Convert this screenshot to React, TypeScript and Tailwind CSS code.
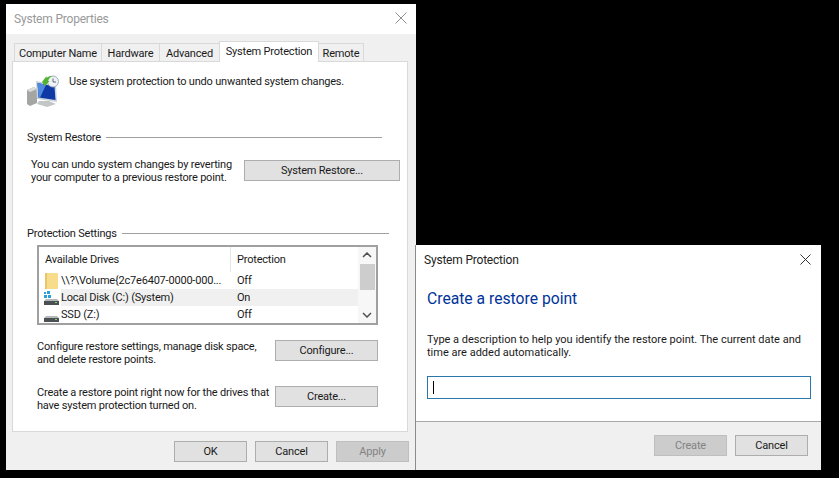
import React from "react";

const font = { sans: "font-['Roboto','Liberation_Sans',sans-serif]" };

const Btn = ({ label, className, disabled }: { label: string; className: string; disabled?: boolean }) => (
  <div
    className={`flex items-center justify-center h-[21px] border ${
      disabled ? "bg-[#cccccc] border-[#bfbfbf] text-[#838383]" : "bg-[#e1e1e1] border-[#adadad] text-[#1a1a1a]"
    } ${className}`}
  >
    {label}
  </div>
);

const CloseX = ({ color, size }: { color: string; size: number }) => (
  <svg width={size} height={size} viewBox="0 0 12 12" fill="none" stroke={color} strokeWidth="1">
    <path d="M0.5 0.5 L11.5 11.5 M11.5 0.5 L0.5 11.5" />
  </svg>
);

const RestoreIcon = () => (
  <svg width="32" height="32" viewBox="0 0 32 32" className="shrink-0">
    {/* tower */}
    <path d="M0 15 L7 12 L10 14 L10 28 L3 31 L0 29 Z" fill="#a3a6a3" />
    <path d="M0 15 L7 12 L10 14 L3 17 Z" fill="#dadcda" />
    {/* monitor */}
    <path d="M9 6 L29 10 L30 27 L10 24 Z" fill="#c9d2d8" />
    <path d="M10.5 8 L27.5 11.5 L28.5 25 L11.5 22.5 Z" fill="#0f3aa6" />
    <path d="M10.5 8 L19 9.8 L13 22.7 L11.5 22.5 Z" fill="#4f8ae0" />
    <path d="M12 26 L22 26 L29 29 L20 32 L10 29 Z" fill="#c2c6c6" />
    {/* clock */}
    <circle cx="26" cy="6.5" r="5.5" fill="#eef2f5" stroke="#9fb0ba" strokeWidth="1" />
    <path d="M26 3.5 V7 H29" fill="none" stroke="#5f6c77" strokeWidth="1" />
    {/* green arrow */}
    <path d="M15 7 L19.5 1 L19.5 3 C21 1.5 23 1 25 1 C22.5 2.5 21.5 4.5 21 6 L22.5 6 L18 11 Z" fill="#52b233" />
  </svg>
);

const FolderIcon = () => (
  <svg width="13" height="16" viewBox="0 0 13 16" className="shrink-0 ml-px">
    <rect x="0" y="0" width="13" height="16" rx="1" fill="#f7dc8c" />
    <rect x="0" y="0" width="2" height="16" fill="#e9c468" />
  </svg>
);

const DiskIcon = ({ system }: { system?: boolean }) => (
  <svg width="15" height="14" viewBox="0 0 15 14" className="shrink-0">
    {system && (
      <g fill="#2a9fdc">
        <rect x="0" y="1" width="2" height="2" />
        <rect x="3" y="0" width="3" height="3" />
        <rect x="0" y="4" width="3" height="3" />
        <rect x="4" y="4" width="3" height="3" />
      </g>
    )}
    <path d="M2 8 H13 L15 10 H0 Z" fill="#b5b9bc" />
    <rect x="0" y="10" width="15" height="4" fill="#4b5055" />
    <rect x="11" y="11" width="2" height="1" fill="#7fd46a" />
  </svg>
);

const Row = ({ icon, name, status, selected }: { icon: React.ReactNode; name: string; status: string; selected?: boolean }) => (
  <div className="flex h-[17px] items-center shrink-0">
    <div className="w-[22px] pl-[5px] flex items-center shrink-0">{icon}</div>
    <div className={`flex flex-1 h-full items-center ${selected ? "bg-[#f0f0f0]" : ""}`}>
      <div className="w-[176px] whitespace-nowrap overflow-hidden">{name}</div>
      <div>{status}</div>
    </div>
  </div>
);

const GroupTitle = ({ label, line }: { label: string; line: string }) => (
  <div className="flex items-center h-[16px] ml-[14px]">
    <span className="whitespace-nowrap">{label}</span>
    <div className={`h-px bg-[#a0a0a0] ml-[5px] ${line}`} />
  </div>
);

const tabs = [
  { label: "Computer Name", w: "w-[88px]" },
  { label: "Hardware", w: "w-[59px]" },
  { label: "Advanced", w: "w-[61px]" },
];

export default function App() {
  return (
    <div className={`relative w-[839px] h-[478px] bg-black overflow-hidden text-[11px] tracking-[-0.2px] leading-[13px] text-[#1a1a1a] ${font.sans}`}>
      {/* System Properties window */}
      <div className="absolute left-[6px] top-[4px] w-[410px] h-[466px] bg-[#f0f0f0] flex flex-col">
        <div className="h-[30px] bg-white flex items-center justify-between pl-[8px] pr-[9px] shrink-0">
          <span className="text-[12px] text-[#999999]">System Properties</span>
          <div className="mb-[2px]">
            <CloseX color="#8f8f8f" size={12} />
          </div>
        </div>

        <div className="flex items-end h-[27px] pl-[8px] shrink-0 relative z-10">
          {tabs.map((t) => (
            <div key={t.label} className={`${t.w} h-[18px] pt-px border border-b-0 border-[#d9d9d9] -mr-px flex items-center justify-center whitespace-nowrap`}>
              {t.label}
            </div>
          ))}
          <div className="w-[100px] h-[21px] bg-white border border-b-0 border-[#d9d9d9] flex items-start pt-[3px] justify-center whitespace-nowrap -mb-px relative">
            System Protection
          </div>
          <div className="w-[45px] h-[18px] pt-px border border-b-0 border-l-0 border-[#d9d9d9] flex items-center justify-center">Remote</div>
        </div>

        <div className="ml-[6px] w-[396px] h-[371px] bg-white border border-[#d9d9d9] shrink-0">
          <div className="flex pl-[14px] pt-[13px] h-[67px]">
            <RestoreIcon />
            <span className="ml-[10px] whitespace-nowrap">Use system protection to undo unwanted system changes.</span>
          </div>

          <GroupTitle label="System Restore" line="w-[276px]" />
          <div className="flex mt-[13px] ml-[18px] h-[67px]">
            <div className="w-[213px] whitespace-nowrap">
              You can undo system changes by reverting
              <br />
              your computer to a previous restore point.
            </div>
            <Btn label="System Restore..." className="w-[156px] mt-[2px]" />
          </div>

          <GroupTitle label="Protection Settings" line="w-[267px]" />

          <div className="ml-[24px] mt-[4px] w-[341px] h-[80px] border-2 border-[#a0a0a0] flex">
            <div className="flex-1 flex flex-col min-w-0">
              <div className="flex h-[25px] items-center shrink-0">
                <div className="w-[192px] pl-[6px] h-full flex items-center border-r border-[#e5e5e5]">Available Drives</div>
                <div className="pl-[6px]">Protection</div>
              </div>
              <Row icon={<FolderIcon />} name="\\?\Volume{2c7e6407-0000-000..." status="Off" />
              <Row icon={<DiskIcon system />} name="Local Disk (C:) (System)" status="On" selected />
              <Row icon={<DiskIcon />} name="SSD (Z:)" status="Off" />
            </div>
            <div className="w-[18px] flex flex-col items-center shrink-0 bg-[#f7f7f7]">
              <svg width="10" height="6" viewBox="0 0 10 6" fill="none" stroke="#505050" strokeWidth="1.5" className="mt-[5px]">
                <path d="M1 5 L5 1 L9 5" />
              </svg>
              <div className="w-[15px] h-[26px] bg-[#cdcdcd] mt-[6px]" />
              <svg width="10" height="6" viewBox="0 0 10 6" fill="none" stroke="#505050" strokeWidth="1.5" className="mt-[22px]">
                <path d="M1 1 L5 5 L9 1" />
              </svg>
            </div>
          </div>

          <div className="flex mt-[15px] ml-[24px]">
            <div className="w-[238px] whitespace-nowrap">
              Configure restore settings, manage disk space,
              <br />
              and delete restore points.
            </div>
            <Btn label="Configure..." className="w-[103px]" />
          </div>

          <div className="flex mt-[20px] ml-[24px]">
            <div className="w-[238px] whitespace-nowrap">
              Create a restore point right now for the drives that
              <br />
              have system protection turned on.
            </div>
            <Btn label="Create..." className="w-[103px]" />
          </div>
        </div>

        <div className="flex justify-end gap-[8px] pr-[7px] mt-[9px]">
          <Btn label="OK" className="w-[73px]" />
          <Btn label="Cancel" className="w-[73px]" />
          <Btn label="Apply" className="w-[73px]" disabled />
        </div>
      </div>

      {/* System Protection dialog */}
      <div className="absolute left-[415px] top-[245px] w-[406px] h-[225px] bg-white border-l border-[#8c8c8c] flex flex-col">
        <div className="flex items-center justify-between h-[29px] pl-[8px] pr-[10px] shrink-0">
          <span className="text-[12px] text-[#222222] mt-[2px]">System Protection</span>
          <CloseX color="#222222" size={11} />
        </div>
        <div className="ml-[11px] mt-[15px] text-[15.7px] tracking-normal leading-[20px] text-[#003399]">Create a restore point</div>
        <div className="ml-[11px] mt-[24px] w-[385px] whitespace-nowrap tracking-normal">
          Type a description to help you identify the restore point. The current date and
          <br />
          time are added automatically.
        </div>
        <div className="ml-[11px] mt-[17px] w-[384px] h-[23px] border border-[#2a78ab] flex items-center pl-[5px] shrink-0">
          <div className="w-px h-[13px] bg-black" />
        </div>
        <div className="mt-[22px] flex-1 bg-[#f0f0f0] border-t border-[#a8a8a8] flex justify-end gap-[8px] pt-[13px] pr-[13px]">
          <Btn label="Create" className="w-[73px]" disabled />
          <Btn label="Cancel" className="w-[73px]" />
        </div>
      </div>
    </div>
  );
}
